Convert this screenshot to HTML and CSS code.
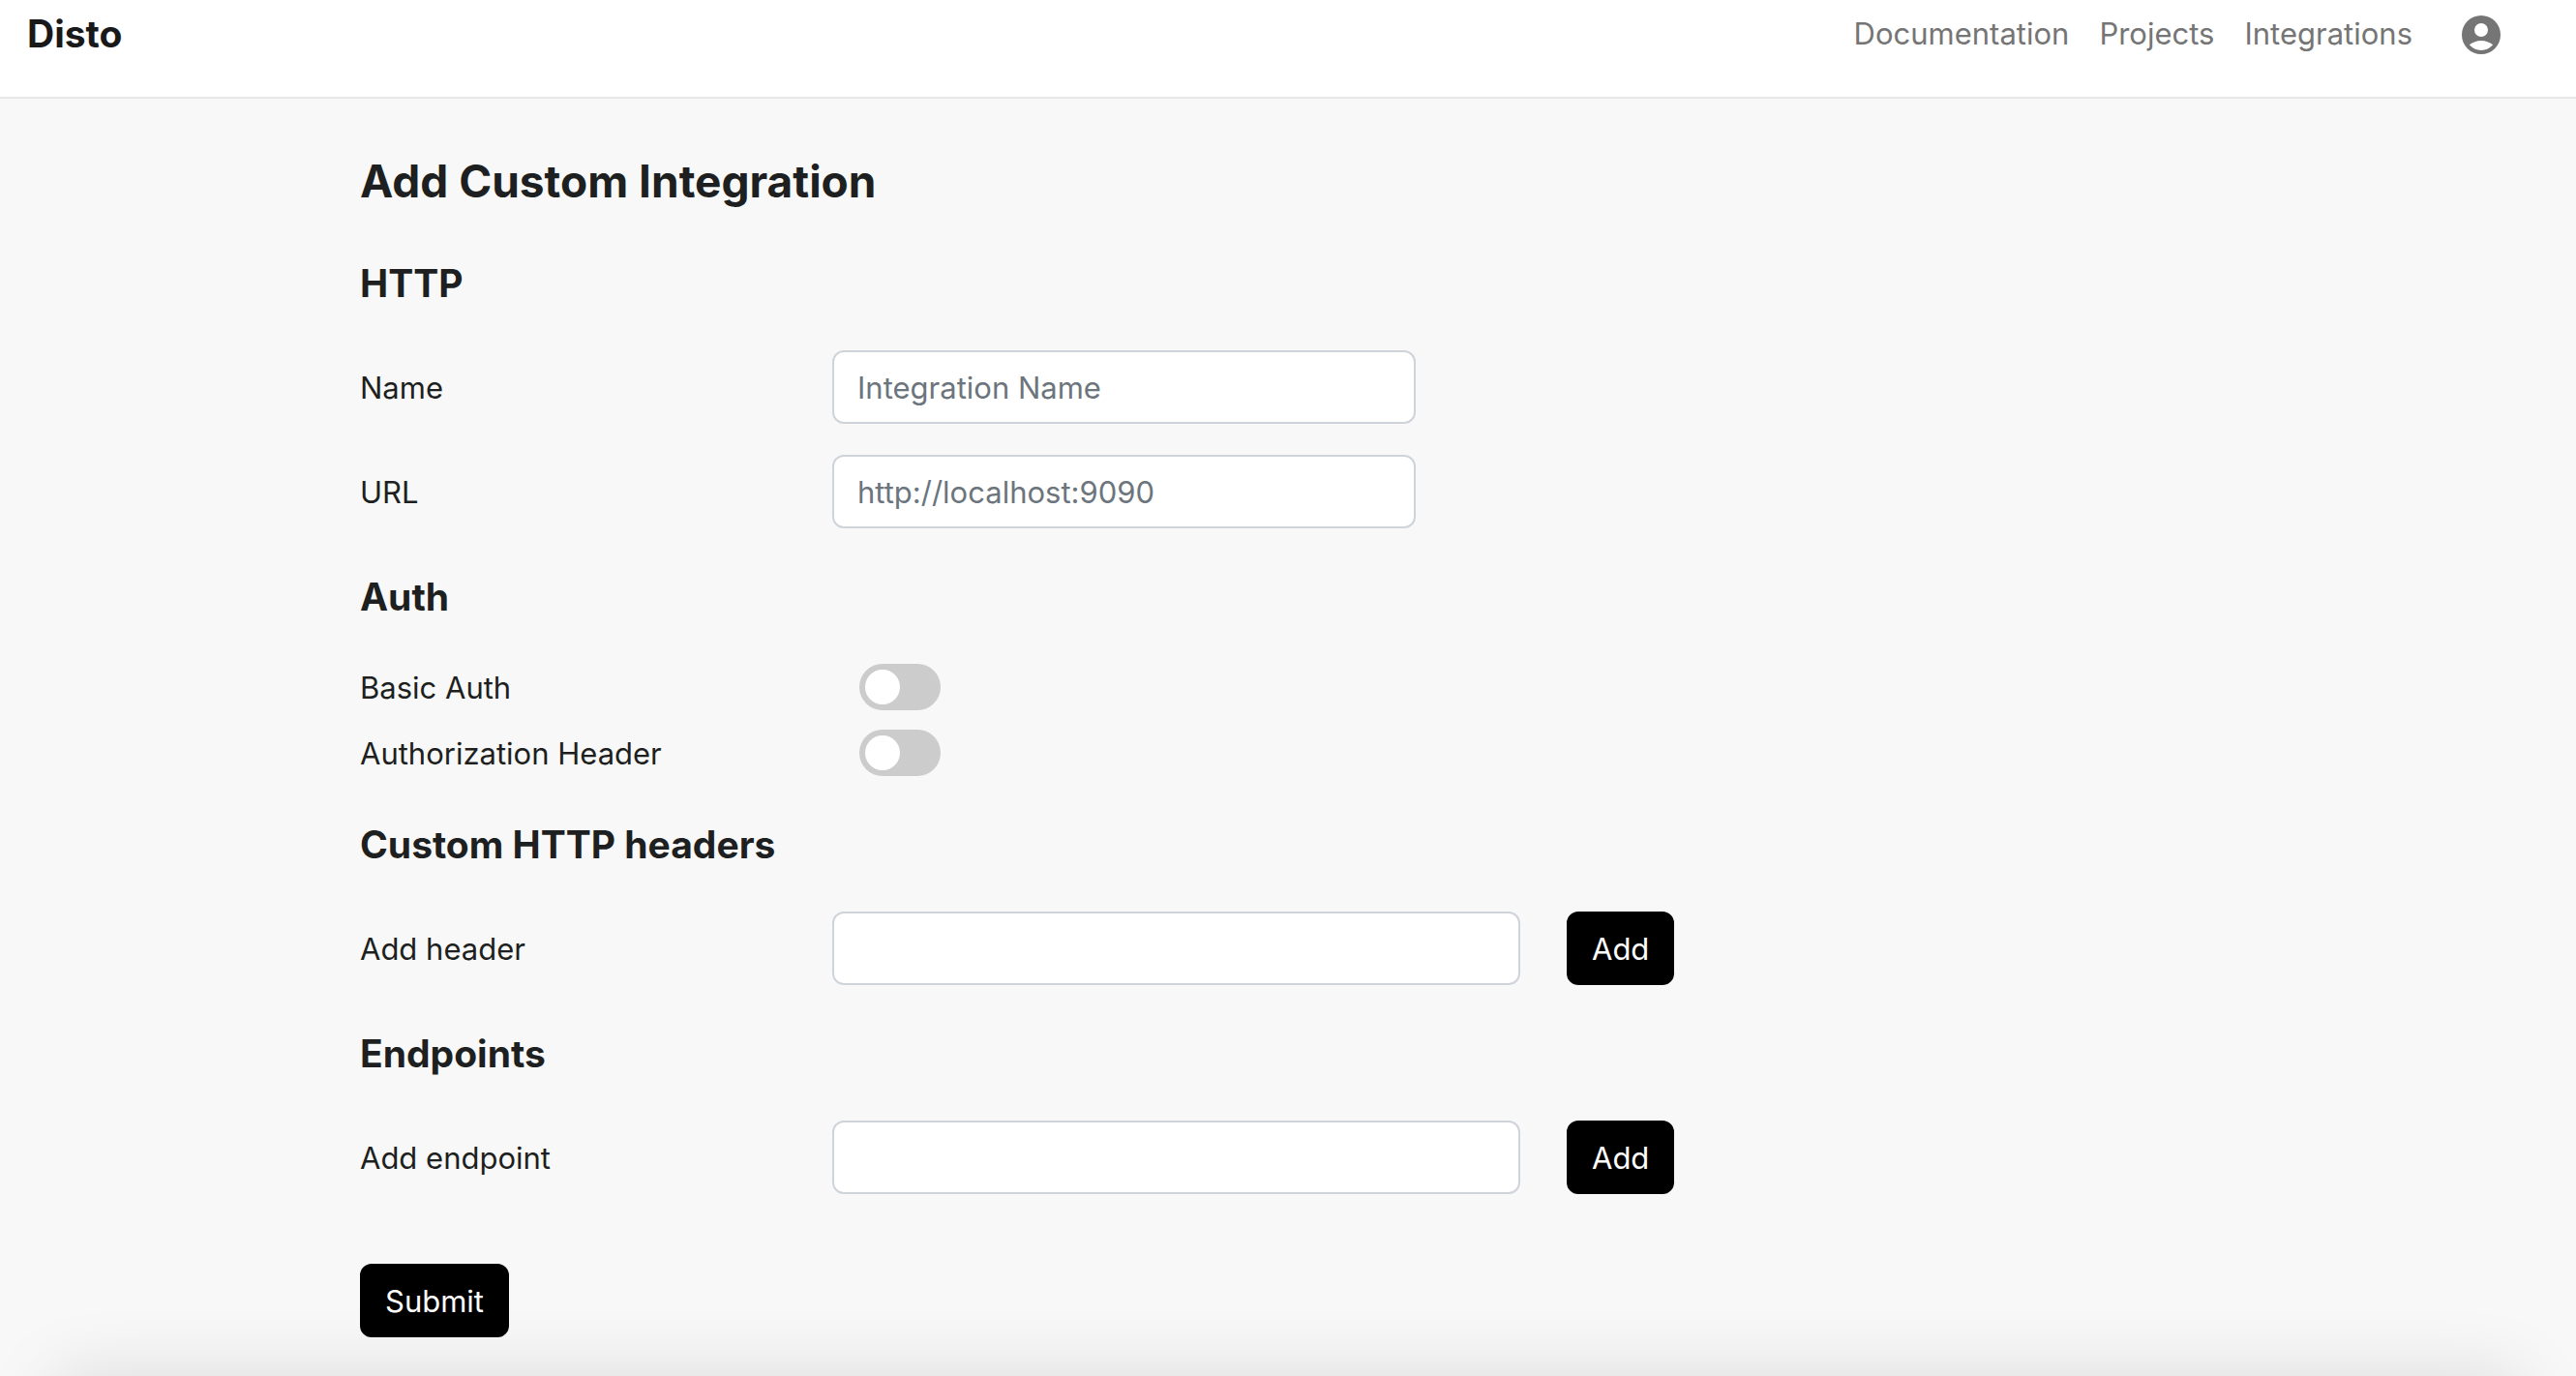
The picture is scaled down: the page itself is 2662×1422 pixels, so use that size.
FILE: index.html
```html
<!DOCTYPE html>
<html lang="en">
<head>
  <meta charset="utf-8">
  <meta name="viewport" content="width=device-width, initial-scale=1">
  <title>Disto</title>
  <link rel="stylesheet" href="styles.css">
</head>
<body>
  <header class="navbar">
    <a class="brand" href="#">Disto</a>
    <nav class="nav-links">
      <a class="nav-link" href="#">Documentation</a>
      <a class="nav-link" href="#">Projects</a>
      <a class="nav-link" href="#">Integrations</a>
      <a class="account" href="#" aria-label="Account">
        <svg class="account-icon" viewBox="0 0 40 40" aria-hidden="true">
          <path fill="currentColor" fill-rule="evenodd" d="M20 0a20 20 0 1 0 0 40a20 20 0 0 0 0-40zM20 8a7 7 0 1 1 0 14a7 7 0 0 1 0-14zM20 36c-4.900 0-9.200-2.200-12.200-5.700C11.200 27.600 15.400 26 20 26s8.800 1.600 12.200 4.300C29.200 33.800 24.900 36 20 36z"/>
        </svg>
      </a>
    </nav>
  </header>

  <main class="page">
    <h1 class="page-title">Add Custom Integration</h1>
    <form class="form">
      <section class="section">
        <h2 class="section-title">HTTP</h2>
        <div class="rows">
          <div class="row">
            <label class="label" for="name">Name</label>
            <input class="field" id="name" type="text" placeholder="Integration Name">
          </div>
          <div class="row">
            <label class="label" for="url">URL</label>
            <input class="field" id="url" type="text" placeholder="http://localhost:9090">
          </div>
        </div>
      </section>

      <section class="section">
        <h2 class="section-title">Auth</h2>
        <div class="rows rows-tight">
          <div class="row">
            <label class="label" for="basic-auth">Basic Auth</label>
            <input class="switch" id="basic-auth" type="checkbox">
          </div>
          <div class="row">
            <label class="label" for="auth-header">Authorization Header</label>
            <input class="switch" id="auth-header" type="checkbox">
          </div>
        </div>
      </section>

      <section class="section">
        <h2 class="section-title">Custom HTTP headers</h2>
        <div class="row">
          <label class="label" for="header">Add header</label>
          <div class="field-group">
            <input class="field field-wide" id="header" type="text">
            <button class="button" type="button">Add</button>
          </div>
        </div>
      </section>

      <section class="section">
        <h2 class="section-title">Endpoints</h2>
        <div class="row">
          <label class="label" for="endpoint">Add endpoint</label>
          <div class="field-group">
            <input class="field field-wide" id="endpoint" type="text">
            <button class="button" type="button">Add</button>
          </div>
        </div>
      </section>

      <button class="button submit" type="submit">Submit</button>
    </form>
  </main>
</body>
</html>
```
FILE: styles.css
```css
* {
  box-sizing: border-box;
}

body {
  margin: 0;
  background: #f8f8f8;
  color: #1d1f20;
  font: 400 31px/48px Inter, "Liberation Sans", sans-serif;
}

/* Soft shadow rising from the bottom edge of the window */
body::after {
  content: "";
  position: fixed;
  top: 100%;
  left: 56px;
  right: 56px;
  height: 80px;
  box-shadow: 0 0 76px rgba(0, 0, 0, 0.12);
  pointer-events: none;
}

.navbar {
  display: flex;
  align-items: flex-start;
  justify-content: space-between;
  padding: 11px 78px 41px 28px;
  background: #fff;
  border-bottom: 2px solid #e8e8e8;
}

.brand {
  color: #191919;
  font-size: 39px;
  font-weight: 700;
  text-decoration: none;
}

.nav-links {
  display: flex;
  align-items: center;
  gap: 31px;
}

.nav-link {
  color: #757575;
  text-decoration: none;
}

.account {
  display: flex;
  margin-left: 20px;
  padding-top: 2px;
  color: #757575;
}

.account-icon {
  width: 40px;
  height: 40px;
}

.page {
  max-width: 1966px;
  margin: 0 auto;
  padding: 56px 24px 40px;
}

.page-title {
  margin: 0 0 53px;
  font-size: 46px;
  font-weight: 700;
  line-height: 58px;
}

.section {
  margin-bottom: 47px;
}

.section-title {
  margin: 0 0 45px;
  font-size: 39px;
  font-weight: 700;
  line-height: 48px;
}

.rows {
  display: grid;
  gap: 32px;
}

.rows-tight {
  gap: 20px;
}

.row {
  display: grid;
  grid-template-columns: 488px 1fr;
  align-items: center;
}

.label {
  padding-top: 2px;
  line-height: 46px;
}

.field-group {
  display: flex;
  gap: 48px;
}

.field {
  width: 603px;
  max-width: 100%;
  height: 76px;
  padding: 12px 24px;
  border: 2px solid #ced4da;
  border-radius: 12px;
  background: #fff;
  color: inherit;
  font: inherit;
}

.field-wide {
  width: 711px;
}

.field::placeholder {
  color: #6c757d;
  opacity: 1;
}

.switch {
  appearance: none;
  display: flex;
  width: 84px;
  height: 48px;
  margin: 0 28px;
  padding: 6px;
  border-radius: 24px;
  background: #ccc;
}

.switch::before {
  content: "";
  width: 36px;
  height: 36px;
  border-radius: 50%;
  background: #fff;
}

.switch:checked {
  justify-content: flex-end;
  background: #000;
}

.button {
  padding: 13px 24px 11px;
  border: 2px solid #000;
  border-radius: 12px;
  background: #000;
  color: #fff;
  font: inherit;
}

.submit {
  margin-top: 25px;
}
```
